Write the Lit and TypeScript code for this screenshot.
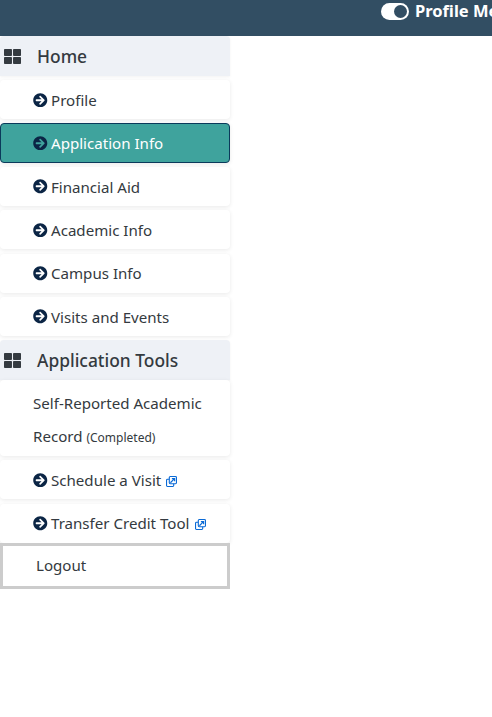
import { LitElement, html, css } from "lit";
import { customElement } from "lit/decorators.js";

const arrow = html`<svg class="arrow" viewBox="0 0 512 512"><path d="M256 8c137 0 248 111 248 248S393 504 256 504 8 393 8 256 119 8 256 8zm-28.9 143.6l75.5 72.4H120c-13.3 0-24 10.7-24 24v16c0 13.3 10.7 24 24 24h182.6l-75.5 72.4c-9.7 9.3-9.9 24.8-.4 34.3l11 10.9c9.4 9.4 24.6 9.4 33.9 0L404.3 273c9.4-9.4 9.4-24.6 0-33.9L271.6 106.3c-9.4-9.4-24.6-9.4-33.9 0l-11 10.9c-9.5 9.6-9.3 25.1.4 34.4z"/></svg>`;
const grid = html`<svg class="grid" viewBox="0 0 512 512"><path d="M296 32h192c13.255 0 24 10.745 24 24v160c0 13.255-10.745 24-24 24H296c-13.255 0-24-10.745-24-24V56c0-13.255 10.745-24 24-24zm-80 0H24C10.745 32 0 42.745 0 56v160c0 13.255 10.745 24 24 24h192c13.255 0 24-10.745 24-24V56c0-13.255-10.745-24-24-24zM0 296v160c0 13.255 10.745 24 24 24h192c13.255 0 24-10.745 24-24V296c0-13.255-10.745-24-24-24H24c-13.255 0-24 10.745-24 24zm296 184h192c13.255 0 24-10.745 24-24V296c0-13.255-10.745-24-24-24H296c-13.255 0-24 10.745-24 24v160c0 13.255 10.745 24 24 24z"/></svg>`;
const ext = html`<svg class="ext" viewBox="0 0 12 12" fill="none" stroke="#0a6ad6" stroke-width="1.2"><rect x="0.6" y="3.6" width="7.8" height="7.8" rx="1"/><rect x="3.6" y="0.6" width="7.8" height="7.8" rx="1" fill="#fff"/><path d="M4.8 7.4L9 3.2M6.4 2.8h3v3" stroke-width="1.3"/></svg>`;

@customElement("app-root")
export class AppRoot extends LitElement {
  static styles = css`
    :host { display: block; height: 717px; background: #fff; overflow: hidden;
      font-family: "Noto Sans", "Open Sans", sans-serif; color: #343a40; }
    .top { height: 36px; background: #324e63; display: flex; align-items: flex-start;
      padding: 0 0 0 381px; overflow: hidden; color: #fff; white-space: nowrap; }
    .toggle { flex: none; width: 28px; height: 17px; margin: 3px 6px 0 0; }
    .top b { font-size: 16.5px; line-height: 22px; font-weight: 700; }
    nav { width: 230px; display: flex; flex-direction: column; }
    .head { height: 40px; box-sizing: border-box; background: #eef1f6; border-radius: 4px 4px 0 0;
      display: flex; align-items: center; font-size: 17.4px; font-weight: 500;
      box-shadow: 0 1px 3px rgba(0,0,0,.05); }
    .head.second { margin-top: 4px; padding-top: 1px; }
    .grid { width: 17px; height: 17px; margin: 0 16px 0 4px; fill: #343a40; flex: none; }
    .item { height: 39px; margin-top: 4.33px; background: #fff; border-radius: 4px;
      box-shadow: 0 1px 4px rgba(0,0,0,.09); padding: 0.3px 0 0 33px;
      display: flex; align-items: center; font-size: 15.1px; box-sizing: border-box; }
    .arrow { width: 14.5px; height: 14.5px; margin-right: 3.5px; fill: #0b2545; flex: none; }
    .ext { width: 11px; height: 11px; margin: 3px 0 0 5px; flex: none; }
    .active { background: #3fa39d; color: #fff; border: 1px solid #0b3a5b;
      padding-left: 32px; height: 40px; margin-top: 3.33px; }
    .multi { display: block; height: 76px; line-height: 32.6px; padding-top: 7px; margin-top: 0; }
    small { font-size: 12px; }
    .logout { height: 46px; margin-top: 0; border: 3px solid #ccc; border-radius: 0; padding: 0 0 1px 33px; box-shadow: none; }
  `;

  render() {
    return html`
      <div class="top">
        <svg class="toggle" viewBox="0 0 28 17"><rect width="28" height="17" rx="8.5" fill="#fff"/><circle cx="19.5" cy="8.5" r="6.5" fill="#324e63"/></svg>
        <b>Profile Menu</b>
      </div>
      <nav>
        <div class="head">${grid}Home</div>
        <div class="item">${arrow}Profile</div>
        <div class="item active">${arrow}Application Info</div>
        <div class="item">${arrow}Financial Aid</div>
        <div class="item">${arrow}Academic Info</div>
        <div class="item">${arrow}Campus Info</div>
        <div class="item">${arrow}Visits and Events</div>
        <div class="head second">${grid}Application Tools</div>
        <div class="item multi">Self-Reported Academic Record <small>(Completed)</small></div>
        <div class="item">${arrow}Schedule a Visit${ext}</div>
        <div class="item">${arrow}Transfer Credit Tool${ext}</div>
        <div class="item logout">Logout</div>
      </nav>
    `;
  }
}
